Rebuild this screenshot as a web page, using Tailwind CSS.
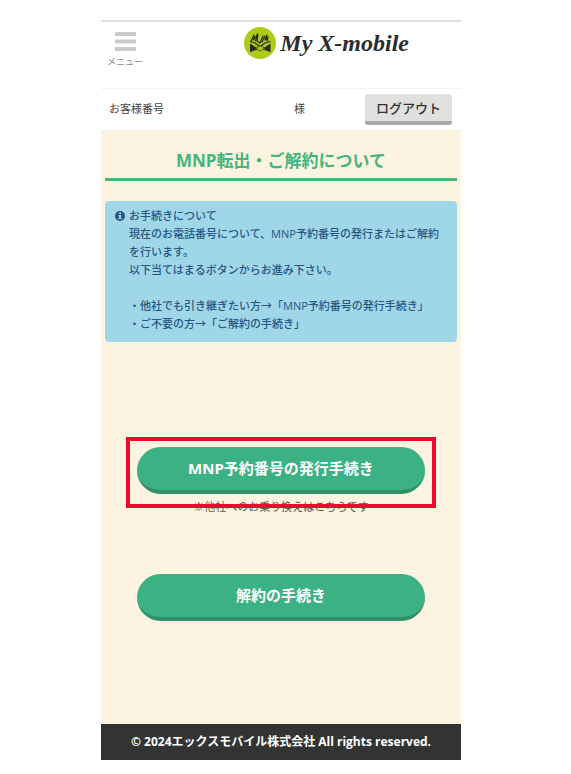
<!DOCTYPE html>
<html lang="ja">
<head>
    <meta charset="UTF-8">
    <meta name="viewport" content="width=device-width, initial-scale=1.0">
    <title>My X-mobile</title>
    <script src="https://cdn.jsdelivr.net/npm/@tailwindcss/browser@4"></script>
    <style>
        body {
            font-family: 'Open Sans', 'Noto Sans CJK JP', sans-serif;
        }
    </style>
</head>
<body class="bg-white pt-5 pl-[101px]">
    <div class="w-full max-w-[360px]">
        <header class="border-t-2 border-[#dfe1d9] bg-white">
            <div class="flex items-start justify-between h-[67px] border-b border-[#f3f3f3] pt-1 pr-[52px]">
                <button type="button" class="flex w-12 flex-col items-center gap-1 pt-[6px] text-[#8c8c8c] cursor-pointer">
                    <svg class="w-[21px] h-[19px]" viewBox="0 0 21 19" fill="#cbcbcb" aria-hidden="true">
                        <rect width="21" height="4"/>
                        <rect y="7.5" width="21" height="4"/>
                        <rect y="15" width="21" height="4"/>
                    </svg>
                    <span class="text-[9px] leading-[14px]">メニュー</span>
                </button>
                <a href="#" class="flex items-center gap-1 pt-px">
                    <svg class="w-8 h-8 shrink-0" viewBox="0 0 32 32" aria-hidden="true">
                        <circle cx="16" cy="16" r="16" fill="#aecb17"/>
                        <path d="M6 16.5l7 4.5-7 4zM26.5 16.5l-7 4.5 7 4z" fill="#262c20"/>
                        <path d="M6 14.5l5 1.5 5 3.5 5-3.5 5.5-1.5M6 24.5l7-2.5M26.5 24.5l-7-2.5" fill="none" stroke="#262c20" stroke-width="1.2"/>
                        <path d="M13 20l3-1 3.5 1v2.5L16 24l-3-1.5z" fill="#aecb17" stroke="#262c20" stroke-width="0.6"/>
                        <path d="M7 14l3-6-.5 5 4-6-2 7M14 8l-1 6 3 2 3-7M21 9l-3 6M23 8l-2 5 3-3-1 4" fill="none" stroke="#262c20" stroke-width="1.2" stroke-linecap="round" stroke-linejoin="round"/>
                    </svg>
                    <span class="font-['Liberation_Serif',serif] text-[24px] leading-[32px] font-bold italic text-[#2b2e2d] whitespace-nowrap">My X-mobile</span>
                </a>
            </div>
            <div class="flex items-center h-[41px] pl-2 pr-[9px] text-[11px] text-[#444]">
                <span>お客様番号</span>
                <span class="ml-auto mr-[60px]">様</span>
                <button type="button" class="h-[31px] w-[87px] rounded-[3px] border-b-4 border-[#a9a9a9] bg-[#e0e0de] text-[13px] leading-[24px] font-medium text-[#333] cursor-pointer">ログアウト</button>
            </div>
        </header>

        <main class="bg-[#fcf3e1] border-t border-[#f3eee2] px-1 pt-[19px] pb-[103px]">
            <h1 class="border-b-3 border-[#45b47d] pb-[6px] text-center text-[17px] leading-[22px] font-bold text-[#45b47d]">MNP転出・ご解約について</h1>

            <section class="mt-5 flex gap-1 rounded-[4px] bg-[#9fd7e9] pt-[6px] pb-[9px] pl-[10px] pr-2 text-[11px] leading-[18px] font-medium text-[#285582]">
                <svg class="mt-1 w-[10px] h-[10px] shrink-0" viewBox="0 0 10 10" aria-hidden="true">
                    <circle cx="5" cy="5" r="5" fill="#285582"/>
                    <path d="M4 1.5h2v1.5H4zM3.5 4H6v3h.6v1H3.4V7H4V5h-.5z" fill="#9fd7e9"/>
                </svg>
                <div>
                    <h2>お手続きについて</h2>
                    <p>現在のお電話番号について、MNP予約番号の発行またはご解約を行います。<br>以下当てはまるボタンからお進み下さい。</p>
                    <ul class="mt-[18px]">
                        <li>・他社でも引き継ぎたい方→「MNP予約番号の発行手続き」</li>
                        <li>・ご不要の方→「ご解約の手続き」</li>
                    </ul>
                </div>
            </section>

            <div class="relative mt-[105px] flex flex-col items-center">
                <button type="button" class="h-[47px] w-[288px] rounded-full border-b-4 border-[#338f6a] bg-[#3cb183] text-[15px] font-bold text-white cursor-pointer">MNP予約番号の発行手続き</button>
                <p class="mt-1 text-[11px] leading-[18px] text-[#555]">※他社へのお乗り換えはこちらです</p>
                <!-- highlight frame over the button and its note -->
                <div class="absolute -top-[10px] inset-x-[21px] h-[71px] border-4 border-[#ea0a2b] pointer-events-none"></div>
            </div>

            <div class="mt-[58px] flex justify-center">
                <button type="button" class="h-[47px] w-[288px] rounded-full border-b-4 border-[#338f6a] bg-[#3cb183] text-[15px] font-bold text-white cursor-pointer">解約の手続き</button>
            </div>
        </main>

        <footer class="bg-[#323433] py-[9px] text-center font-bold text-white">
            <small class="block text-[12px] leading-[18px]">© 2024エックスモバイル株式会社 All rights reserved.</small>
        </footer>
    </div>
</body>
</html>
